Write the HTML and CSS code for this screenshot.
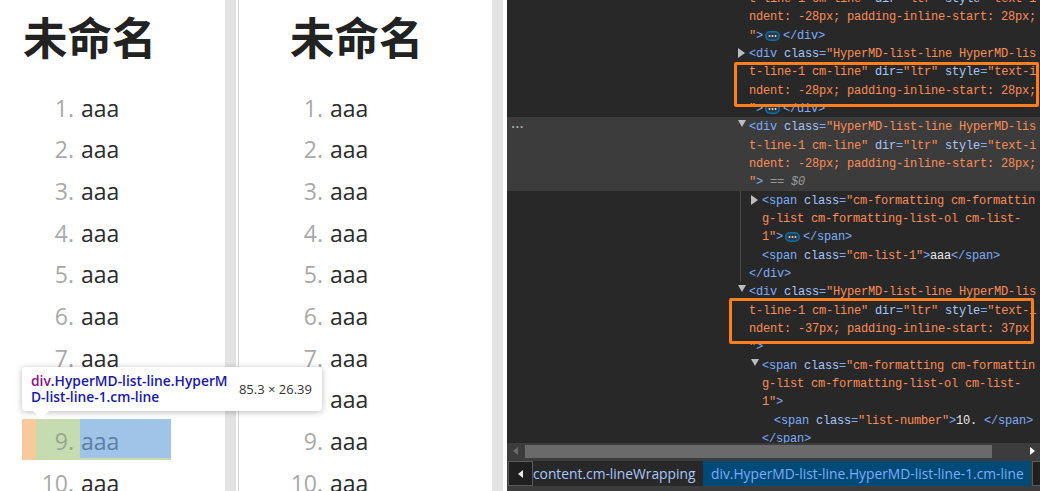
FILE: index.html
```html
<!DOCTYPE html>
<html lang="zh">
<head>
<meta charset="utf-8">
<title>未命名</title>
<link rel="stylesheet" href="styles.css">
</head>
<body>
<svg class="defs" width="0" height="0"><symbol id="more" viewBox="0 0 15 10"><rect x="0.75" y="0.75" width="13.5" height="8.5" rx="4.2" fill="#2a3a48" stroke="#0b70a8" stroke-width="1.5"/><circle cx="4.5" cy="5" r="1" fill="#d8d8d8"/><circle cx="7.5" cy="5" r="1" fill="#d8d8d8"/><circle cx="10.5" cy="5" r="1" fill="#d8d8d8"/></symbol></svg>
<div class="app">
  <section class="pane pane-left">
    <h1 class="title">未命名</h1>
    <div class="row"><span class="num">1. </span><span class="txt">aaa</span></div>
    <div class="row"><span class="num">2. </span><span class="txt">aaa</span></div>
    <div class="row"><span class="num">3. </span><span class="txt">aaa</span></div>
    <div class="row"><span class="num">4. </span><span class="txt">aaa</span></div>
    <div class="row"><span class="num">5. </span><span class="txt">aaa</span></div>
    <div class="row"><span class="num">6. </span><span class="txt">aaa</span></div>
    <div class="row"><span class="num">7. </span><span class="txt">aaa</span></div>
    <div class="row"><span class="num">8. </span><span class="txt">aaa</span></div>
    <div class="row row-hl"><span class="num">9. </span><span class="txt">aaa</span></div>
    <div class="row"><span class="num">10. </span><span class="txt">aaa</span></div>
    <div class="tip">
      <div class="tip-name"><span class="tip-tag">div</span>.HyperMD-list-line.HyperMD-list-line-1.cm-line</div>
      <div class="tip-size">85.3 × 26.39</div>
    </div>
  </section>
  <div class="gutter"></div>
  <section class="pane pane-mid">
    <h1 class="title">未命名</h1>
    <div class="row"><span class="num">1. </span><span class="txt">aaa</span></div>
    <div class="row"><span class="num">2. </span><span class="txt">aaa</span></div>
    <div class="row"><span class="num">3. </span><span class="txt">aaa</span></div>
    <div class="row"><span class="num">4. </span><span class="txt">aaa</span></div>
    <div class="row"><span class="num">5. </span><span class="txt">aaa</span></div>
    <div class="row"><span class="num">6. </span><span class="txt">aaa</span></div>
    <div class="row"><span class="num">7. </span><span class="txt">aaa</span></div>
    <div class="row"><span class="num">8. </span><span class="txt">aaa</span></div>
    <div class="row"><span class="num">9. </span><span class="txt">aaa</span></div>
    <div class="row"><span class="num">10. </span><span class="txt">aaa</span></div>
  </section>
  <div class="gutter gutter-right"></div>
  <section class="devtools">
    <div class="tree">
      <div class="l"><span class="v">t-line-1 cm-line"</span> <span class="a">dir</span><span class="t">=</span><span class="v">"ltr"</span> <span class="a">style</span><span class="t">=</span><span class="v">"text-i</span></div>
      <div class="l"><span class="v">ndent: -28px; padding-inline-start: 28px;</span></div>
      <div class="l"><span class="v">"</span><span class="t">&gt;</span><svg class="more"><use href="#more"/></svg><span class="t">&lt;/div&gt;</span></div>
      <div class="l"><i class="arr arr-r"></i><span class="t">&lt;div</span> <span class="a">class</span><span class="t">=</span><span class="v">"HyperMD-list-line HyperMD-lis</span></div>
      <div class="l"><span class="v">t-line-1 cm-line"</span> <span class="a">dir</span><span class="t">=</span><span class="v">"ltr"</span> <span class="a">style</span><span class="t">=</span><span class="v">"text-i</span></div>
      <div class="l"><span class="v">ndent: -28px; padding-inline-start: 28px;</span></div>
      <div class="l"><span class="v">"</span><span class="t">&gt;</span><svg class="more"><use href="#more"/></svg><span class="t">&lt;/div&gt;</span></div>
      <div class="sel">
        <span class="sel-dots">•••</span>
        <div class="l"><i class="arr arr-d"></i><span class="t">&lt;div</span> <span class="a">class</span><span class="t">=</span><span class="v">"HyperMD-list-line HyperMD-lis</span></div>
        <div class="l"><span class="v">t-line-1 cm-line"</span> <span class="a">dir</span><span class="t">=</span><span class="v">"ltr"</span> <span class="a">style</span><span class="t">=</span><span class="v">"text-i</span></div>
        <div class="l"><span class="v">ndent: -28px; padding-inline-start: 28px;</span></div>
        <div class="l"><span class="v">"</span><span class="t">&gt;</span> <span class="eq">== $0</span></div>
      </div>
      <div class="kids">
        <div class="l2"><i class="arr arr-r"></i><span class="t">&lt;span</span> <span class="a">class</span><span class="t">=</span><span class="v">"cm-formatting cm-formattin</span></div>
        <div class="l2"><span class="v">g-list cm-formatting-list-ol cm-list-</span></div>
        <div class="l2"><span class="v">1"</span><span class="t">&gt;</span><svg class="more"><use href="#more"/></svg><span class="t">&lt;/span&gt;</span></div>
        <div class="l2"><span class="t">&lt;span</span> <span class="a">class</span><span class="t">=</span><span class="v">"cm-list-1"</span><span class="t">&gt;</span><span class="w">aaa</span><span class="t">&lt;/span&gt;</span></div>
        <div class="l1"><span class="t">&lt;/div&gt;</span></div>
      </div>
      <div class="l"><i class="arr arr-d"></i><span class="t">&lt;div</span> <span class="a">class</span><span class="t">=</span><span class="v">"HyperMD-list-line HyperMD-lis</span></div>
      <div class="l"><span class="v">t-line-1 cm-line"</span> <span class="a">dir</span><span class="t">=</span><span class="v">"ltr"</span> <span class="a">style</span><span class="t">=</span><span class="v">"text-i</span></div>
      <div class="l"><span class="v">ndent: -37px; padding-inline-start: 37px</span></div>
      <div class="l"><span class="v">"</span><span class="t">&gt;</span></div>
      <div class="l lv2"><i class="arr arr-d"></i><span class="t">&lt;span</span> <span class="a">class</span><span class="t">=</span><span class="v">"cm-formatting cm-formattin</span></div>
      <div class="l lv2"><span class="v">g-list cm-formatting-list-ol cm-list-</span></div>
      <div class="l lv2"><span class="v">1"</span><span class="t">&gt;</span></div>
      <div class="l lv3"><span class="t">&lt;span</span> <span class="a">class</span><span class="t">=</span><span class="v">"list-number"</span><span class="t">&gt;</span><span class="w">10. </span><span class="t">&lt;/span&gt;</span></div>
      <div class="l lv2"><span class="t">&lt;/span&gt;</span></div>
    </div>
    <div class="mark mark-a"></div>
    <div class="mark mark-b"></div>
    <div class="hscroll">
      <i class="sarr sarr-l"></i>
      <div class="thumb"></div>
      <i class="sarr sarr-r"></i>
    </div>
    <div class="crumbs">
      <div class="crumb-btn"><i class="sarr sarr-w"></i></div>
      <div class="crumb">content.cm-lineWrapping</div>
      <div class="crumb crumb-on">div.HyperMD-list-line.HyperMD-list-line-1.cm-line</div>
      <div class="crumb-btn crumb-end"></div>
    </div>
  </section>
</div>
</body>
</html>
```
FILE: styles.css
```css
* { box-sizing: border-box; }
html, body { margin: 0; height: 100%; overflow: hidden; background: #fff; }
.defs { position: absolute; }
.app { display: flex; width: 1040px; height: 491px; overflow: hidden; font-family: "Open Sans", "Noto Sans CJK SC", sans-serif; }
.pane { position: relative; background: #fff; height: 491px; flex: none; }
.pane-left { width: 225px; padding-left: 22px; z-index: 2; }
.pane-mid { width: 253px; padding-left: 32px; overflow: hidden; }
.title { margin: 0 0 0 1px; height: 85.6px; font: 700 44.5px/72px "Noto Sans CJK SC", sans-serif; color: #222; }
.pane-mid .title { margin-left: 19px; }
.row { display: flex; width: 149px; height: 40.67px; margin-bottom: 1px; padding-left: 14px; font-size: 23px; line-height: 44px; color: #2b2b2b; }
.num { width: 44px; flex: none; text-align: right; white-space: pre; color: #a9a9a9; }
.txt { flex: 1; padding-left: 1px; }
.row-hl { border-left: 14px solid #f8c99b; padding-left: 0; background: #c4dcaf; }
.row-hl .num { color: #98a78f; }
.row-hl .txt { background: #9fc4e8; height: 39px; color: #5c81a3; }
.gutter { flex: none; width: 14px; background: linear-gradient(to right, #e3e3e3 11px, #fff 11px, #fff 13px, #d8d8d8 13px); }
.gutter-right { background: linear-gradient(to right, #e3e3e3 11px, #fff 11px); width: 15px; }
.tip { position: absolute; left: 22px; top: 367px; width: 300px; height: 44px; display: flex; align-items: center; padding: 0 10px 0 9px; background: #fff; border-radius: 3px; box-shadow: 0 1px 6px rgba(0,0,0,.28); font-size: 13px; }
.tip::after { content: ""; position: absolute; left: 11px; bottom: -8px; border: 8px solid transparent; border-bottom: 0; border-top-color: #fff; }
.tip-name { width: 200px; flex: none; font-size: 13.8px; line-height: 16px; font-weight: 600; color: #1a1aa6; word-break: break-all; }
.tip-tag { color: #881280; }
.tip-size { margin-left: auto; color: #333; }
.devtools { position: relative; flex: none; width: 533px; height: 491px; background: #282828; overflow: hidden; font: 12px/20px "Liberation Mono", monospace; letter-spacing: -0.2px; }
.tree { height: 443px; overflow: hidden; }
.tree > :first-child { margin-top: -11px; }
.l { height: 18.33px; padding-left: 242px; white-space: pre; }
.lv2 { padding-left: 255px; }
.lv3 { padding-left: 267px; }
.sel { position: relative; background: #3c3c3c; }
.sel-dots { position: absolute; left: 4px; top: 0; font-size: 7px; color: #b5b5b5; letter-spacing: 0; }
.kids { margin-left: 233px; border-left: 1px solid #4a4a4a; }
.l2 { height: 18.33px; padding-left: 21px; white-space: pre; }
.l1 { height: 18.33px; padding-left: 8px; white-space: pre; }
.t { color: #7cacf8; }
.a { color: #a8c7fa; }
.v { color: #fb8c55; }
.w { color: #e8e8e8; }
.eq { color: #999; font-style: italic; }
.more { width: 15px; height: 10px; margin: 0 3px 0 2px; vertical-align: -2px; }
.arr { display: inline-block; width: 7px; margin: 0 4px 0 -11px; }
.arr-r { border-left: 7px solid #bdbdbd; border-top: 5px solid transparent; border-bottom: 5px solid transparent; height: 10px; width: 0; vertical-align: -1px; }
.arr-d { border-top: 7px solid #bdbdbd; border-left: 4px solid transparent; border-right: 4px solid transparent; height: 0; width: 8px; margin-right: 3px; vertical-align: 3px; }
.mark { position: absolute; border: 3px solid #ff7f1f; border-radius: 2px; }
.mark-a { left: 227px; top: 62px; width: 305px; height: 45px; }
.mark-b { left: 222px; top: 298px; width: 305px; height: 46px; }
.hscroll { display: flex; align-items: center; height: 16px; background: #3c3c3c; padding: 0 5px 0 6px; }
.thumb { width: 467px; height: 13px; background: #6a6a6a; margin: 0 0 0 7px; }
.sarr { display: block; width: 0; height: 0; border-top: 4px solid transparent; border-bottom: 4px solid transparent; }
.sarr-l { border-right: 5px solid #6a6a6a; }
.sarr-r { border-left: 5px solid #fff; margin-left: auto; }
.sarr-w { border-right: 5px solid #e8e8e8; }
.crumbs { display: flex; height: 32px; align-items: stretch; padding: 2px 0 5px 1px; background: #3c3c3c; font: 13.8px/25px "Open Sans", sans-serif; letter-spacing: 0; }
.crumb-btn { width: 25px; flex: none; display: flex; align-items: center; justify-content: center; background: #1f1f1f; border: 1px solid #5a5a5a; }
.crumb-end { width: 9px; border-right: 0; margin-left: 1px; }
.crumb { flex: none; width: 170px; background: #282828; color: #a8c7fa; white-space: nowrap; overflow: hidden; }
.crumb-on { width: 328px; padding-left: 8px; background: #004a77; color: #7cacf8; }
```
